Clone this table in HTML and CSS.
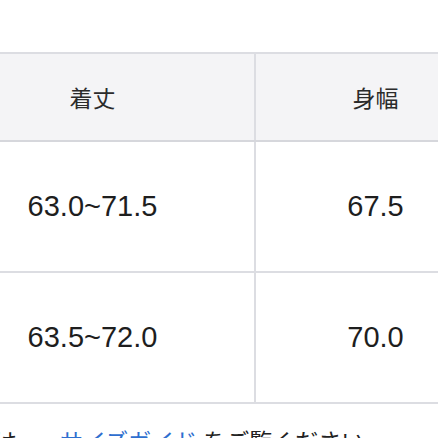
FILE: index.html
```html
<!DOCTYPE html>
<html lang="ja">
<head>
<meta charset="utf-8">
<link rel="stylesheet" href="styles.css">
</head>
<body>
<div class="page">
  <div class="table-wrap">
    <table class="size-table">
      <thead>
        <tr><th class="col-a">着丈</th><th class="col-b">身幅</th></tr>
      </thead>
      <tbody>
        <tr><td>63.0~71.5</td><td>67.5</td></tr>
        <tr><td>63.5~72.0</td><td>70.0</td></tr>
      </tbody>
    </table>
  </div>
  <p class="note">は、<a class="link" href="#">サイズガイド</a>をご覧ください</p>
</div>
</body>
</html>
```
FILE: styles.css
```css
html, body {
  margin: 0;
  padding: 0;
  background: #ffffff;
}
.page {
  width: 438px;
  height: 438px;
  overflow: hidden;
  padding-top: 52px;
  box-sizing: border-box;
  font-family: "Liberation Sans", "Noto Sans CJK JP", sans-serif;
}
.table-wrap {
  width: 438px;
  overflow: hidden;
}
.size-table {
  border-collapse: collapse;
  margin-left: -71px;
  width: 562px;
  table-layout: fixed;
}
.col-a { width: 323px; }
.col-b { width: 239px; }
.size-table th,
.size-table td {
  border: 2px solid #dcdde2;
  text-align: center;
  padding: 0;
}
.size-table th {
  background: #f4f4f6;
  height: 86px;
  font-family: "Noto Sans CJK JP", sans-serif;
  font-weight: 400;
  font-size: 23px;
  color: #2b2b2b;
  border-bottom-color: #d6d7dc;
}
.size-table td {
  height: 129px;
  font-size: 29px;
  color: #1e1e1e;
}
.note {
  margin: 19px 0 0 -6px;
  font-family: "Noto Sans CJK JP", sans-serif;
  font-size: 23px;
  color: #222222;
  white-space: nowrap;
}
.link {
  color: #2f6fcf;
  text-decoration: none;
  margin: 0 6px 0 20px;
}
```
